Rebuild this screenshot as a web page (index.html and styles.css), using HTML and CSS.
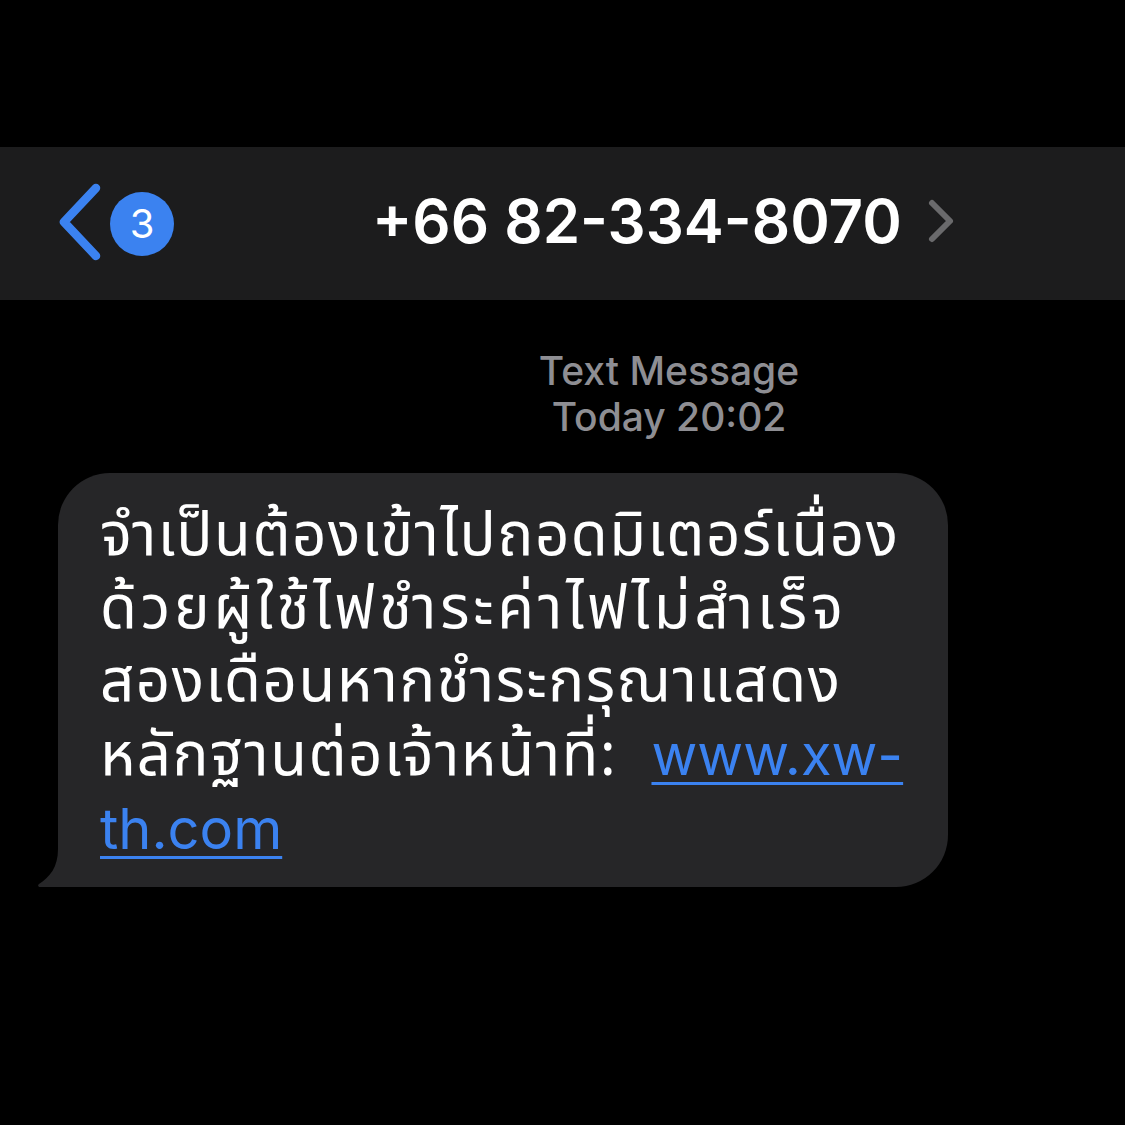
FILE: index.html
```html
<!DOCTYPE html>
<html lang="th">
<head>
<meta charset="utf-8">
<link rel="stylesheet" href="styles.css">
</head>
<body>
<div class="screen">
  <header class="nav">
    <div class="back">
      <svg class="chev" width="48" height="80" viewBox="0 0 48 80"><path d="M40 6 L8 40 L40 74" fill="none" stroke="#3b82f0" stroke-width="8.5" stroke-linecap="round" stroke-linejoin="round"/></svg>
      <span class="badge">3</span>
    </div>
    <div class="title">+66 82-334-8070</div>
    <svg class="fwd" width="30" height="46" viewBox="0 0 30 46"><path d="M6 5 L24 23 L6 41" fill="none" stroke="#6a6a6c" stroke-width="6" stroke-linecap="round" stroke-linejoin="round"/></svg>
  </header>
  <div class="stamp">
    <div class="stamp-line">Text Message</div>
    <div class="stamp-line">Today 20:02</div>
  </div>
  <div class="thread">
    <div class="bubble">
      <svg class="tail" width="80" height="52" viewBox="0 0 80 52"><path d="M20 0 L80 0 L80 52 L2 52 C0 52 -0.5 50 1 49 C12 42 20 32 20 14 Z" fill="#262628"/></svg>
      <p class="msg">จำเป็นต้องเข้าไปถอดมิเตอร์เนื่อง<br><span class="wide">ด้วยผู้ใช้ไฟชำระค่าไฟไม่สำเร็จ</span><br>สองเดือนหากชำระกรุณาแสดง<br>หลักฐานต่อเจ้าหน้าที่:&nbsp; <a class="link" href="#">www.xw-<br>th.com</a></p>
    </div>
  </div>
</div>
</body>
</html>
```
FILE: styles.css
```css
html, body {
  margin: 0;
  padding: 0;
  background: #000;
}
.screen {
  width: 1125px;
  height: 1125px;
  background: #000;
  padding-top: 147px;
  box-sizing: border-box;
  font-family: "Inter", "Liberation Sans", sans-serif;
}
.nav {
  height: 153px;
  background: #1c1c1d;
  display: flex;
  align-items: center;
  box-sizing: border-box;
  padding-left: 56px;
}
.back {
  display: flex;
  align-items: center;
  gap: 6px;
  margin-top: -4px;
}
.chev {
  display: block;
}
.badge {
  width: 64px;
  height: 64px;
  border-radius: 50%;
  background: #3b82f0;
  color: #fff;
  font-size: 40px;
  display: flex;
  align-items: center;
  justify-content: center;
  font-weight: 400;
  margin-top: 4px;
}
.title {
  color: #fff;
  font-size: 60px;
  font-weight: 600;
  margin-left: 198px;
  margin-top: -6px;
}
.fwd {
  margin-left: 24px;
  margin-top: -6px;
}
.stamp {
  margin-left: 509px;
  width: 320px;
  padding-top: 48px;
  text-align: center;
  color: #8e8e93;
  font-size: 39px;
  font-weight: 500;
  line-height: 46px;
  white-space: nowrap;
}
.thread {
  padding-top: 33px;
  padding-left: 58px;
}
.bubble {
  position: relative;
  width: 890px;
  height: 414px;
  box-sizing: border-box;
  background: #262628;
  border-radius: 52px;
  padding: 27px 20px 0 42px;
}
.tail {
  position: absolute;
  left: -20px;
  bottom: 0;
  display: block;
}
.msg {
  position: relative;
  margin: 0;
  color: #fff;
  font-size: 60px;
  line-height: 73px;
  letter-spacing: 1.5px;
  font-family: "Noto Sans Thai", "Noto Sans", "DejaVu Sans", sans-serif;
  white-space: nowrap;
}
.wide {
  letter-spacing: 3.8px;
}
.link {
  color: #3b82f0;
  text-decoration: underline;
  text-decoration-thickness: 3px;
  text-underline-offset: 7px;
  font-size: 56px;
  letter-spacing: 0;
  font-family: "Inter", "Liberation Sans", sans-serif;
}
```
